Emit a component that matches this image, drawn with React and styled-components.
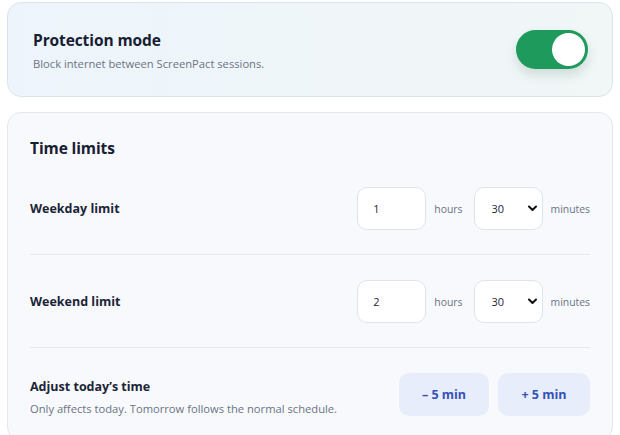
import React, { useState } from "react";
import styled, { createGlobalStyle } from "styled-components";

const GlobalStyle = createGlobalStyle`
    html, body {
        margin: 0;
        padding: 0;
        background: #ffffff;
        font-family: "Open Sans", "Noto Sans", sans-serif;
        color: #1e293b;
    }
    * {
        box-sizing: border-box;
    }
`;

const Page = styled.div`
    display: flex;
    flex-direction: column;
    gap: 15px;
    padding: 2px 7px 0 7px;
`;

const ModeCard = styled.section`
    display: flex;
    align-items: center;
    justify-content: space-between;
    height: 95px;
    padding: 0 24px 0 25px;
    border: 1px solid #d9e5ee;
    border-radius: 14px;
    background: linear-gradient(90deg, #edf4fb 0%, #f1f7f7 100%);
`;

const ModeText = styled.div`
    display: flex;
    flex-direction: column;
    gap: 5px;
`;

const CardTitle = styled.h2`
    margin: 0;
    font-size: 15.5px;
    line-height: 22px;
    font-weight: 700;
    color: #172033;
    letter-spacing: -0.1px;
`;

const Hint = styled.p`
    margin: 0;
    font-size: 11.2px;
    line-height: 15px;
    color: #6b7484;
`;

const Switch = styled.button`
    position: relative;
    width: 72px;
    height: 39px;
    border: none;
    border-radius: 20px;
    padding: 0;
    cursor: pointer;
    background: ${(p) => (p.$on ? "#1f9a5d" : "#cbd5e1")};
    box-shadow: 0 6px 12px rgba(30, 80, 60, 0.16);

    &::after {
        content: "";
        position: absolute;
        top: 3px;
        left: ${(p) => (p.$on ? "36px" : "3px")};
        width: 33px;
        height: 33px;
        border-radius: 50%;
        background: #ffffff;
        transition: left 0.2s;
    }
`;

const LimitsCard = styled.section`
    padding: 24px 22px 0 22px;
    border: 1px solid #e3e8ef;
    border-radius: 14px;
    background: #f7f9fc;
`;

const SectionTitle = styled(CardTitle)`
    margin-bottom: 3px;
`;

const Row = styled.div`
    display: flex;
    align-items: center;
    justify-content: space-between;
    padding: 25px 0 24px 0;
    border-bottom: ${(p) => (p.$last ? "none" : "1px solid #e6eaf0")};
`;

const RowText = styled.div`
    display: flex;
    flex-direction: column;
    gap: 6px;
    margin-top: 5px;
`;

const RowLabel = styled.span`
    font-size: 12.5px;
    line-height: 17px;
    font-weight: 700;
    color: #1c2536;
`;

const Controls = styled.div`
    display: flex;
    align-items: center;
    gap: 8px;
`;

const Field = styled.input`
    width: 69px;
    height: 43px;
    padding: 0 0 0 15px;
    border: 1px solid #dfe4ea;
    border-radius: 10px;
    background: #ffffff;
    font-family: inherit;
    font-size: 11px;
    color: #1c2536;
    outline: none;
`;

const Unit = styled.span`
    font-size: 10.4px;
    color: #6b7484;
    margin-right: ${(p) => p.$gap || 0}px;
`;

const SelectWrap = styled.div`
    position: relative;
    width: 69px;
    height: 43px;

    svg {
        position: absolute;
        right: 6px;
        top: 18px;
        pointer-events: none;
    }
`;

const Select = styled.select`
    appearance: none;
    width: 100%;
    height: 100%;
    padding: 0 0 0 17px;
    border: 1px solid #dfe4ea;
    border-radius: 10px;
    background: #ffffff;
    font-family: inherit;
    font-size: 11px;
    color: #1c2536;
    outline: none;
`;

const Buttons = styled.div`
    display: flex;
    gap: 9px;
`;

const AdjustButton = styled.button`
    width: ${(p) => p.$w}px;
    height: 43px;
    border: none;
    border-radius: 10px;
    background: #e8edfb;
    color: #3352b8;
    font-family: inherit;
    font-size: 12.5px;
    font-weight: 700;
    cursor: pointer;
`;

const Chevron = () => (
    <svg width="9" height="7" viewBox="0 0 9 7">
        <path d="M1 1.5 L4.5 5 L8 1.5" fill="none" stroke="#111" strokeWidth="2" strokeLinecap="round" strokeLinejoin="round" />
    </svg>
);

const TimeRow = ({ label, hours }) => (
    <Row>
        <RowLabel>{label}</RowLabel>
        <Controls>
            <Field defaultValue={hours} />
            <Unit $gap={3}>hours</Unit>
            <SelectWrap>
                <Select defaultValue="30">
                    <option value="0">0</option>
                    <option value="15">15</option>
                    <option value="30">30</option>
                    <option value="45">45</option>
                </Select>
                <Chevron />
            </SelectWrap>
            <Unit>minutes</Unit>
        </Controls>
    </Row>
);

export default function App() {
    const [protect, setProtect] = useState(true);

    return (
        <>
            <GlobalStyle />
            <Page>
                <ModeCard>
                    <ModeText>
                        <CardTitle>Protection mode</CardTitle>
                        <Hint>Block internet between ScreenPact sessions.</Hint>
                    </ModeText>
                    <Switch $on={protect} onClick={() => setProtect(!protect)} aria-label="Protection mode" />
                </ModeCard>

                <LimitsCard>
                    <SectionTitle>Time limits</SectionTitle>
                    <TimeRow label="Weekday limit" hours="1" />
                    <TimeRow label="Weekend limit" hours="2" />
                    <Row $last>
                        <RowText>
                            <RowLabel>Adjust today’s time</RowLabel>
                            <Hint>Only affects today. Tomorrow follows the normal schedule.</Hint>
                        </RowText>
                        <Buttons>
                            <AdjustButton $w={90}>– 5 min</AdjustButton>
                            <AdjustButton $w={92}>+ 5 min</AdjustButton>
                        </Buttons>
                    </Row>
                </LimitsCard>
            </Page>
        </>
    );
}
